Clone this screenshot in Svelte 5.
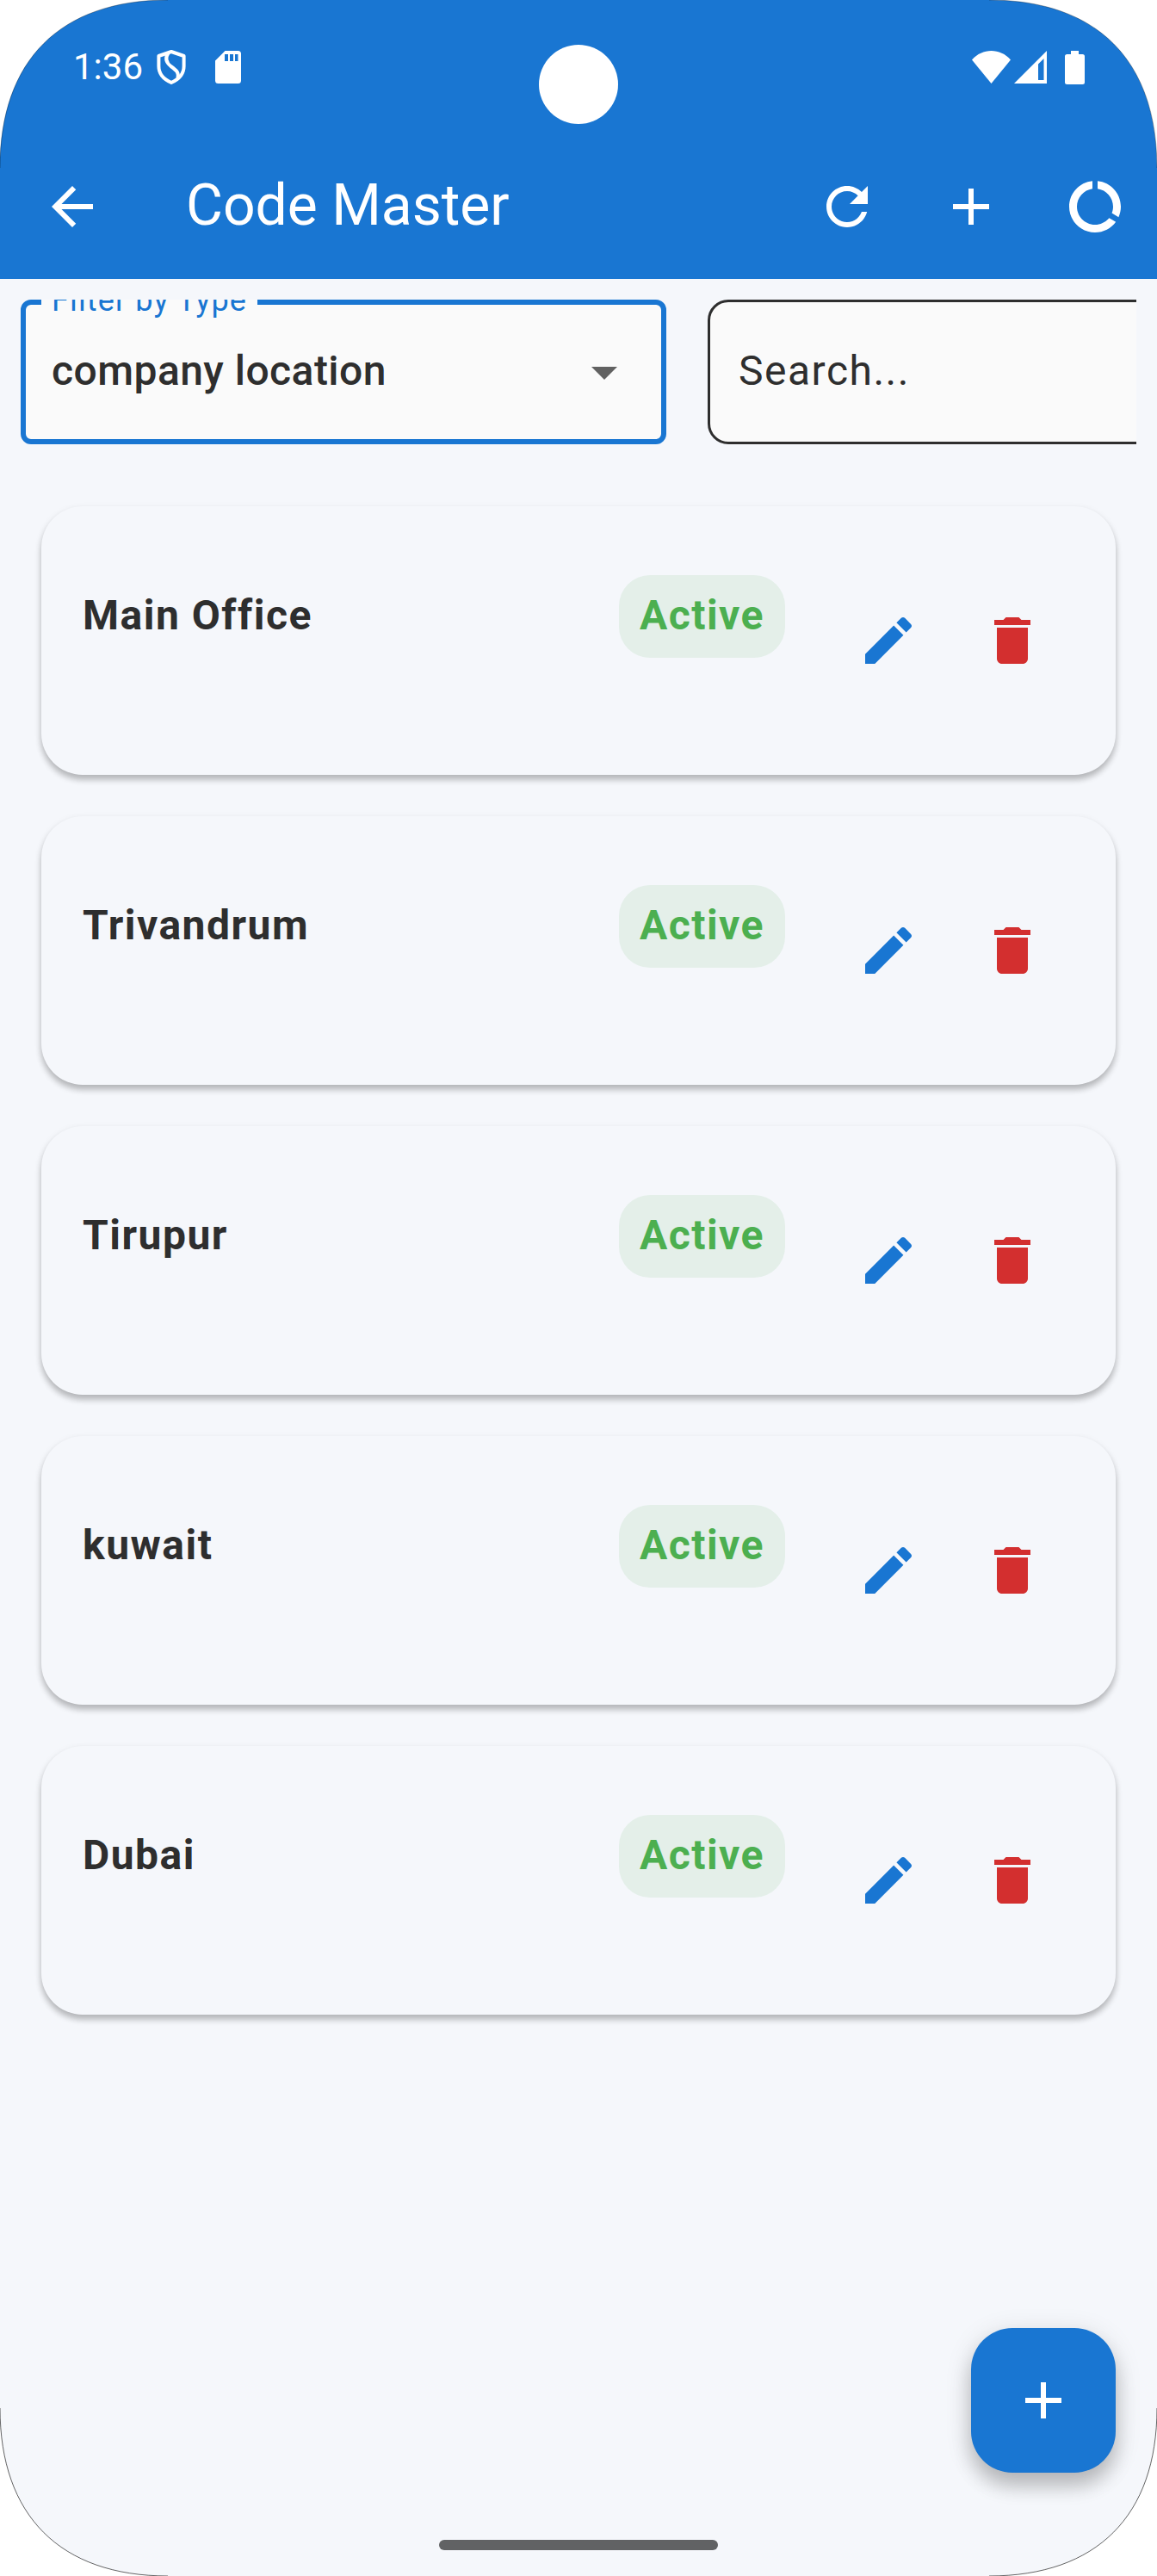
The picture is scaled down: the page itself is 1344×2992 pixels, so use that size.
<script>
  const locations = [
    { name: 'Main Office', status: 'Active' },
    { name: 'Trivandrum', status: 'Active' },
    { name: 'Tirupur', status: 'Active' },
    { name: 'kuwait', status: 'Active' },
    { name: 'Dubai', status: 'Active' }
  ];
</script>

<main class="screen">
  <header class="header">
    <div class="status-bar">
      <span class="time">1:36</span>
      <svg class="shield" viewBox="0 0 34 40" fill="none" stroke="#fff" stroke-width="4" stroke-linejoin="round">
        <path d="M17 2 31.600 7v12c0 8.500-5.600 15-14.600 19C8 34 2.400 27.500 2.400 19V7z" />
        <path d="M13.500 3.500c-4.500 6.500-2 11.500 3 15.500 7 5 9.500 7.500 8 14" />
      </svg>
      <svg class="sd" viewBox="0 0 30 38">
        <path fill="#fff" fill-rule="evenodd" d="M11.500 0H26.500Q30 0 30 3.500V34.500Q30 38 26.500 38H3.500Q0 38 0 34.500V11.500zM11 4V12H15V4zM17 4V12H21V4zM23 4V12H26.500V4z" />
      </svg>
      <span class="spacer"></span>
      <svg class="wifi" viewBox="0 0 45 38"><path fill="#fff" d="M22.500 38 0 10.500C12-3.500 33-3.500 45 10.500z" /></svg>
      <svg class="signal" viewBox="0 0 38 38"><path fill="#fff" fill-rule="evenodd" d="M38 0V38H0zM34.500 9 28 15.500V34H34.500z" /></svg>
      <svg class="battery" viewBox="0 0 23 39"><path fill="#fff" d="M7 0H16V4H20.500Q23 4 23 6.500V36.500Q23 39 20.500 39H2.500Q0 39 0 36.500V6.500Q0 4 2.500 4H7z" /></svg>
      <span class="camera"></span>
    </div>

    <div class="toolbar">
      <button class="icon-button" aria-label="Back">
        <svg viewBox="0 0 24 24"><path d="M20 11H7.830l5.590-5.590L12 4l-8 8 8 8 1.410-1.410L7.830 13H20v-2z" /></svg>
      </button>
      <h1>Code Master</h1>
      <button class="icon-button" aria-label="Refresh">
        <svg viewBox="0 0 24 24"><path d="M17.650 6.350C16.200 4.900 14.210 4 12 4c-4.420 0-7.990 3.580-7.990 8s3.570 8 7.990 8c3.730 0 6.840-2.550 7.730-6h-2.080c-.82 2.330-3.040 4-5.650 4-3.310 0-6-2.690-6-6s2.690-6 6-6c1.660 0 3.140.69 4.220 1.780L13 11h7V4l-2.350 2.350z" /></svg>
      </button>
      <button class="icon-button" aria-label="Add">
        <svg viewBox="0 0 24 24"><path d="M19 13h-6v6h-2v-6H5v-2h6V5h2v6h6v2z" /></svg>
      </button>
      <button class="icon-button" aria-label="Data usage">
        <svg viewBox="0 0 24 24"><path d="M13 2.050v3.030c3.390.49 6 3.390 6 6.920 0 .9-.18 1.750-.48 2.540l2.600 1.530c.56-1.240.88-2.620.88-4.070 0-5.180-3.950-9.450-9-9.950zM12 19c-3.870 0-7-3.130-7-7 0-3.530 2.610-6.430 6-6.920V2.050c-5.060.5-9 4.760-9 9.950 0 5.520 4.470 10 9.990 10 3.310 0 6.240-1.610 8.060-4.090l-2.600-1.530C16.170 17.980 14.210 19 12 19z" /></svg>
      </button>
    </div>
  </header>

  <section class="filters">
    <div class="select">
      <span class="label">Filter by Type</span>
      <span class="value">company location</span>
      <svg viewBox="0 0 24 24"><path d="M7 10l5 5 5-5z" /></svg>
    </div>
    <div class="search">Search...</div>
  </section>

  <section class="list">
    {#each locations as item}
      <article class="card">
        <h2>{item.name}</h2>
        <span class="chip">{item.status}</span>
        <div class="actions">
          <button class="icon-button edit" aria-label="Edit">
            <svg viewBox="0 0 24 24"><path d="M3 17.250V21h3.750L17.810 9.940l-3.750-3.750L3 17.250zM20.710 7.040c.39-.39.39-1.020 0-1.410l-2.340-2.340c-.39-.39-1.020-.39-1.410 0l-1.830 1.830 3.750 3.750 1.830-1.830z" /></svg>
          </button>
          <button class="icon-button delete" aria-label="Delete">
            <svg viewBox="0 0 24 24"><path d="M6 19c0 1.100.9 2 2 2h8c1.100 0 2-.9 2-2V7H6v12zM19 4h-3.500l-1-1h-5l-1 1H5v2h14V4z" /></svg>
          </button>
        </div>
      </article>
    {/each}
  </section>

  <button class="fab" aria-label="Add location">
    <svg viewBox="0 0 24 24"><path d="M19 13h-6v6h-2v-6H5v-2h6V5h2v6h6v2z" /></svg>
  </button>
  <div class="home-pill"></div>

  <!-- Rounded display corners -->
  <svg class="corners" viewBox="0 0 1344 2992" fill="#fff">
    <path d="M0 0V195C0 70 70 0 195 0z" />
    <path d="M1344 0V195C1344 70 1274 0 1149 0z" />
    <path d="M0 2992V2797C0 2922 70 2992 195 2992z" />
    <path d="M1344 2992V2797C1344 2922 1274 2992 1149 2992z" />
    <g fill="none" stroke="#000" stroke-width="1">
      <path stroke-opacity=".3" d="M0 195C0 70 70 0 195 0M1344 195C1344 70 1274 0 1149 0" />
      <path stroke-opacity=".6" d="M0 2797C0 2922 70 2992 195 2992M1344 2797C1344 2922 1274 2992 1149 2992" />
    </g>
  </svg>
</main>

<style>
  :global(body) {
    margin: 0;
    background: #fff;
  }

  .screen {
    position: relative;
    width: 1344px;
    height: 2992px;
    overflow: hidden;
    background: #f5f7fb;
    color: #2e2e2e;
    font-family: Roboto, 'Liberation Sans', sans-serif;
    font-size: 48px;
  }

  svg {
    display: block;
    flex: none;
  }

  h1,
  h2 {
    margin: 0;
  }

  .header {
    height: 324px;
    background: #1976d2;
    color: #fff;
  }

  .status-bar {
    position: relative;
    display: flex;
    align-items: center;
    height: 156px;
    box-sizing: border-box;
    padding: 0 84px 0 85px;
  }

  .time {
    width: 97px;
    font-size: 42px;
    line-height: 50px;
    white-space: nowrap;
  }

  .shield {
    width: 34px;
    height: 40px;
    margin-right: 34px;
  }

  .sd {
    width: 30px;
    height: 38px;
  }

  .spacer {
    flex: 1;
  }

  .wifi {
    width: 45px;
    height: 38px;
    margin-right: 4px;
  }

  .signal {
    width: 38px;
    height: 38px;
    margin-right: 21px;
  }

  .battery {
    width: 23px;
    height: 39px;
  }

  .camera {
    position: absolute;
    left: 626px;
    top: 52px;
    width: 92px;
    height: 92px;
    border-radius: 50%;
    background: #fff;
  }

  .toolbar {
    display: flex;
    align-items: center;
    height: 168px;
    padding-left: 12px;
  }

  h1 {
    flex: 1;
    padding: 0 0 3px 60px;
    font-size: 66px;
    font-weight: 400;
    line-height: 84px;
  }

  .icon-button {
    display: grid;
    place-items: center;
    flex: none;
    width: 144px;
    height: 144px;
    padding: 0;
    border: 0;
    background: none;
    color: inherit;
  }

  .icon-button svg,
  .fab svg,
  .select svg {
    width: 72px;
    height: 72px;
    fill: currentColor;
  }

  .filters {
    display: flex;
    gap: 48px;
    margin: 24px 24px 0;
    height: 168px;
    overflow: hidden;
  }

  .select,
  .search {
    display: flex;
    align-items: center;
    box-sizing: border-box;
    height: 168px;
    background: #fafafa;
    line-height: 72px;
    white-space: nowrap;
  }

  .select {
    position: relative;
    flex: none;
    justify-content: space-between;
    width: 750px;
    padding: 0 30px;
    border: 6px solid #1976d2;
    border-radius: 12px;
  }

  .value {
    padding-bottom: 3px;
    font-weight: 500;
    letter-spacing: 0.45px;
  }

  .select svg {
    color: #616161;
  }

  .label {
    position: absolute;
    left: 18px;
    top: -29px;
    width: 239px;
    padding-left: 12px;
    background: #fafafa;
    color: #1976d2;
    font-size: 36px;
    line-height: 48px;
    letter-spacing: 1.125px;
  }

  .search {
    flex: none;
    width: 750px;
    padding: 0 33px 3px;
    border: 3px solid #2e2e2e;
    border-radius: 24px;
    letter-spacing: 1.5px;
  }

  .list {
    display: flex;
    flex-direction: column;
    gap: 48px;
    padding: 72px 48px 0;
  }

  .card {
    display: flex;
    align-items: flex-start;
    box-sizing: border-box;
    height: 312px;
    padding: 80px 48px 0;
    border-radius: 48px;
    background: #f5f7fb;
    box-shadow:
      0 6px 7px rgba(0, 0, 0, 0.2),
      0 3px 9px rgba(0, 0, 0, 0.1);
  }

  h2 {
    flex: 1;
    padding-top: 11px;
    font-size: 48px;
    font-weight: 700;
    line-height: 72px;
    letter-spacing: 1.5px;
  }

  .chip {
    box-sizing: border-box;
    height: 96px;
    margin-right: 48px;
    padding: 11px 24px 13px;
    border-radius: 36px;
    background: rgba(76, 175, 80, 0.1);
    color: #4caf50;
    font-weight: 700;
    line-height: 72px;
    letter-spacing: 1.5px;
  }

  .actions {
    display: flex;
    margin-top: 4px;
  }

  .edit {
    color: #1976d2;
  }

  .delete {
    color: #d32f2f;
  }

  .fab {
    position: absolute;
    right: 48px;
    bottom: 120px;
    display: grid;
    place-items: center;
    width: 168px;
    height: 168px;
    padding: 0;
    border: 0;
    border-radius: 48px;
    background: #1976d2;
    color: #fff;
    box-shadow:
      0 16px 22px rgba(0, 0, 0, 0.2),
      0 6px 32px rgba(0, 0, 0, 0.12);
  }

  .home-pill {
    position: absolute;
    left: 510px;
    bottom: 30px;
    width: 324px;
    height: 12px;
    border-radius: 6px;
    background: #616264;
  }

  .corners {
    position: absolute;
    inset: 0;
    width: 1344px;
    height: 2992px;
    pointer-events: none;
  }
</style>
